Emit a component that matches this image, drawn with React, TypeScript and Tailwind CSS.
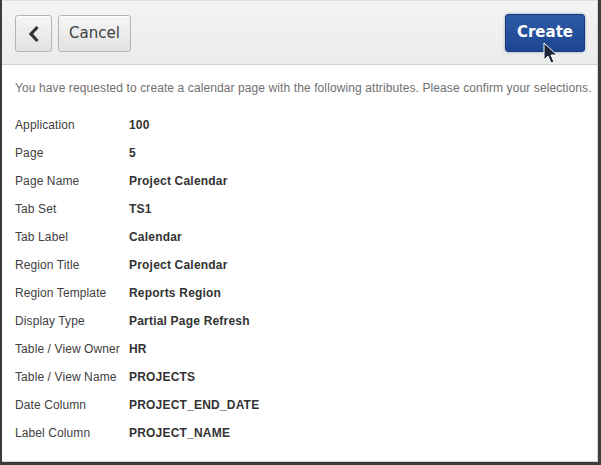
import React from 'react';

const rows: [string, string][] = [
  ['Application', '100'],
  ['Page', '5'],
  ['Page Name', 'Project Calendar'],
  ['Tab Set', 'TS1'],
  ['Tab Label', 'Calendar'],
  ['Region Title', 'Project Calendar'],
  ['Region Template', 'Reports Region'],
  ['Display Type', 'Partial Page Refresh'],
  ['Table / View Owner', 'HR'],
  ['Table / View Name', 'PROJECTS'],
  ['Date Column', 'PROJECT_END_DATE'],
  ['Label Column', 'PROJECT_NAME'],
];

const App: React.FC = () => {
  return (
    <div
      className="w-[601px] h-[465px] bg-white border-l-2 border-r-[3px] border-b-[3px] border-[#3c3c3c] overflow-hidden"
      style={{ fontFamily: '"Liberation Sans", Arial, sans-serif' }}
    >
      <div className="h-full border-r border-b border-[#d4d4d4] flex flex-col">
        {/* toolbar */}
        <div className="relative h-[65px] shrink-0 bg-gradient-to-b from-[#f4f4f4] to-[#ebebeb] border-b border-[#cfcfcf] border-t border-t-[#e0e0e0] flex items-center pl-[13px] pr-[12px] pt-[2px]">
          <button className="w-[37px] h-[37px] rounded-[3px] border border-[#b4b4b4] bg-gradient-to-b from-[#f6f6f6] to-[#e2e2e2] flex items-center justify-center shadow-[inset_0_1px_0_#fff]">
            <svg width="12" height="18" viewBox="0 0 12 18">
              <path d="M9.5 2 L3 9 L9.5 16" fill="none" stroke="#333" strokeWidth="3.2" strokeLinejoin="miter" />
            </svg>
          </button>
          <button
            className="ml-[6px] w-[73px] h-[37px] rounded-[3px] border border-[#b4b4b4] bg-gradient-to-b from-[#f6f6f6] to-[#e2e2e2] text-[15px] text-[#404040] shadow-[inset_0_1px_0_#fff]"
            style={{ fontFamily: '"DejaVu Sans", sans-serif' }}
          >
            Cancel
          </button>
          <div className="flex-1" />
          <button className="-mt-[2px] w-[80px] h-[38px] rounded-[3px] border border-[#16397a] bg-gradient-to-b from-[#2c5aa6] to-[#1d4691] text-white text-[15px] font-bold shadow-[0_0_3px_rgba(40,90,170,0.5)]"
            style={{ fontFamily: '"DejaVu Sans", sans-serif' }}
          >
            Create
          </button>
          {/* mouse pointer */}
          <svg className="absolute left-[541px] top-[41px]" width="16" height="24" viewBox="0 0 16 24">
            <path d="M1 1 L1 18 L5 14 L8 21 L11 20 L8 13 L14 13 Z" fill="#1b2338" stroke="#fff" strokeWidth="1" strokeLinejoin="round" />
          </svg>
        </div>

        {/* body */}
        <div className="px-[13px] pt-[16px]">
          <p className="text-[12px] leading-[14px] text-[#707070] whitespace-nowrap tracking-[0.1px]">
            You have requested to create a calendar page with the following attributes. Please confirm your selections.
          </p>
          <div className="mt-[16px] flex flex-col">
            {rows.map(([label, value]) => (
              <div key={label} className="h-[28px] flex items-center text-[12px]">
                <span className="w-[114px] text-[#404040] tracking-[0.1px]">{label}</span>
                <span className="font-bold text-[#333] tracking-[0.2px]">{value}</span>
              </div>
            ))}
          </div>
        </div>
      </div>
    </div>
  );
};

export default App;
